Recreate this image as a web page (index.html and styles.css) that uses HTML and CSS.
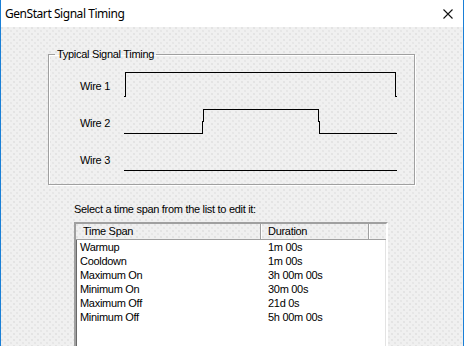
FILE: index.html
```html
<!DOCTYPE html>
<html>
<head>
<meta charset="utf-8">
<link rel="stylesheet" href="styles.css">
</head>
<body>
<div class="window">
  <div class="titlebar">
    <span class="title">GenStart Signal Timing</span>
    <svg class="close" width="10" height="10" viewBox="0 0 10 10"><path d="M0.5 0.5 L9.5 9.5 M9.5 0.5 L0.5 9.5" stroke="#111" stroke-width="1.1" fill="none"/></svg>
  </div>
  <div class="content">
    <fieldset class="group">
      <legend>Typical Signal Timing</legend>
      <div class="wire">
        <span class="wire-label">Wire 1</span>
        <svg class="trace" width="274" height="27" viewBox="0 0 274 27" shape-rendering="crispEdges">
          <path d="M1 1h271v1H1z M1 1h1v25H1z M0 25h1v1H0z M271 1h1v25h-1z M272 25h1v1h-1z" fill="#000"/>
        </svg>
      </div>
      <div class="wire">
        <span class="wire-label">Wire 2</span>
        <svg class="trace" width="274" height="27" viewBox="0 0 274 27" shape-rendering="crispEdges">
          <path d="M0 25h78v1H0z M78 13h1v13h-1z M79 1h1v13h-1z M79 1h116v1H79z M194 1h1v13h-1z M195 13h1v13h-1z M195 25h78v1h-78z" fill="#000"/>
        </svg>
      </div>
      <div class="wire">
        <span class="wire-label">Wire 3</span>
        <svg class="trace" width="274" height="27" viewBox="0 0 274 27" shape-rendering="crispEdges">
          <path d="M0 25h273v1H0z" fill="#000"/>
        </svg>
      </div>
    </fieldset>
    <p class="prompt">Select a time span from the list to edit it:</p>
    <div class="listview">
      <div class="lv-header">
        <div class="hcell">Time Span</div>
        <div class="hcell">Duration</div>
        <div class="hcell filler"></div>
      </div>
      <div class="lv-body">
        <div class="row"><span class="c1">Warmup</span><span class="c2">1m 00s</span></div>
        <div class="row"><span class="c1">Cooldown</span><span class="c2">1m 00s</span></div>
        <div class="row"><span class="c1">Maximum On</span><span class="c2">3h 00m 00s</span></div>
        <div class="row"><span class="c1">Minimum On</span><span class="c2">30m 00s</span></div>
        <div class="row"><span class="c1">Maximum Off</span><span class="c2">21d 0s</span></div>
        <div class="row"><span class="c1">Minimum Off</span><span class="c2">5h 00m 00s</span></div>
      </div>
    </div>
  </div>
</div>
</body>
</html>
```

FILE: styles.css
```css
html, body {
  margin: 0;
  padding: 0;
  background: #ffffff;
}

body {
  font-family: "Liberation Sans", Arial, sans-serif;
  font-size: 11px;
  letter-spacing: -0.3px;
  color: #000;
}

.window {
  width: 464px;
  height: 346px;
  box-sizing: border-box;
  border-left: 1px solid #1a7fd6;
  border-right: 1px solid #1a7fd6;
  display: flex;
  flex-direction: column;
  overflow: hidden;
}

.titlebar {
  height: 27px;
  flex: none;
  background: #ffffff;
  display: flex;
  align-items: center;
  justify-content: space-between;
  padding: 0 10px 0 4px;
}

.title {
  font-family: "Noto Sans", "Open Sans", sans-serif;
  font-size: 12px;
  letter-spacing: -0.45px;
  line-height: 16px;
  margin-top: 1px;
}

.close {
  display: block;
}

.content {
  flex: 1;
  min-height: 0;
  background-color: #f0f0f0;
  background-image:
    radial-gradient(circle at 1px 1px, #e3e3e3 0.7px, transparent 1px),
    radial-gradient(circle at 4px 4px, #e6e6e6 0.7px, transparent 1px);
  background-size: 6px 6px;
  display: flex;
  flex-direction: column;
  padding: 0 0 0 47px;
}

.group {
  width: 367px;
  box-sizing: border-box;
  margin: 21px 0 0 0;
  padding: 10px 0 12px 0;
  border: 1px solid #a0a0a0;
  box-shadow: 1px 1px 0 #ffffff, inset 1px 1px 0 #ffffff;
}

.group legend {
  margin-left: 6px;
  padding: 0 2px;
  line-height: 13px;
}

.wire {
  display: flex;
  align-items: center;
  height: 27px;
  margin-bottom: 10px;
}

.wire:last-child {
  margin-bottom: 0;
}

.wire-label {
  width: 44px;
  padding-left: 31px;
  margin-top: 2px;
}

.trace {
  display: block;
}

.prompt {
  margin: 18px 0 0 26px;
  line-height: 13px;
}

.listview {
  flex: 1;
  width: 314px;
  box-sizing: border-box;
  margin: 6px 0 0 26px;
  border-top: 2px solid #a0a0a0;
  border-left: 2px solid #a0a0a0;
  border-right: 2px solid #ffffff;
  box-shadow: inset 1px 1px 0 #696969, inset -1px 0 0 #e3e3e3;
  background: #ffffff;
  display: flex;
  flex-direction: column;
}

.lv-header {
  display: grid;
  grid-template-columns: 185px 108px 1fr;
  height: 16px;
  box-sizing: border-box;
  border-bottom: 1px solid #a0a0a0;
  background-color: #f0f0f0;
  background-image:
    radial-gradient(circle at 1px 1px, #e3e3e3 0.7px, transparent 1px),
    radial-gradient(circle at 4px 4px, #e6e6e6 0.7px, transparent 1px);
  background-size: 6px 6px;
}

.hcell {
  line-height: 15px;
  padding-left: 7px;
  border-right: 1px solid #a0a0a0;
  box-shadow: inset 1px 0 0 #ffffff;
}

.hcell:first-child {
  box-shadow: none;
}

.hcell.filler {
  border-right: none;
}

.lv-body {
  display: flex;
  flex-direction: column;
}

.row {
  display: grid;
  grid-template-columns: 185px 108px;
  line-height: 14px;
}

.c1 {
  padding-left: 4px;
}

.c2 {
  padding-left: 7px;
}
```
